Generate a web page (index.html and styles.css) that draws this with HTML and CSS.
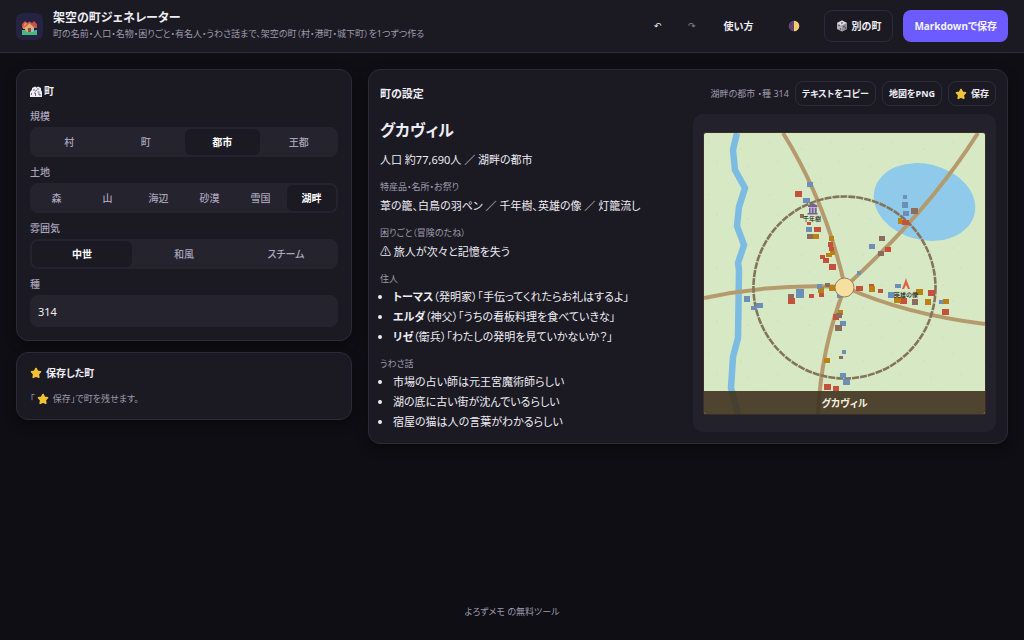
FILE: index.html
```html
<!DOCTYPE html>
<html lang="ja">
<head>
<meta charset="utf-8">
<meta name="viewport" content="width=device-width, initial-scale=1">
<title>架空の町ジェネレーター</title>
<link rel="stylesheet" href="styles.css">
</head>
<body>
<svg class="defs" aria-hidden="true">
  <symbol id="star" viewBox="0 0 12 12"><path d="M6 1.500 7.500 4.300l3 .5-2.200 2.300.5 3.200L6 9l-2.800 1.300.5-3.200-2.200-2.300 3-.5z" fill="#f2c335" stroke="#f2c335" stroke-width="1.600" stroke-linejoin="round"/></symbol>
</svg>
<header class="topbar">
  <div class="brand">
    <svg class="logo" viewBox="0 0 27 27" aria-hidden="true">
      <rect width="27" height="27" rx="7" fill="#252342"/>
      <path d="M6 15V11l3-3 2 2 2.500-1.500L16 10l2-2 3 3v4z" fill="#c9503f"/>
      <path d="M8 11l2-2 1.500 3-2 4H7z" fill="#ef8a62"/>
      <path d="M9 14l4.500-4 4.500 4v5H9z" fill="#e5a878"/>
      <path d="M8.500 14 13.500 9.500l5 4.500" fill="none" stroke="#d65c42" stroke-width="1.300"/>
      <path d="M12 15h3v4h-3z" fill="#805247"/><path d="M15.500 15H18v3h-2.500z" fill="#8cc8d7"/>
      <path d="M6 17h3l2 2h6l2-2h2v5H6z" fill="#45b980"/>
    </svg>
    <div class="brand-text">
      <h1>架空の町ジェネレーター</h1>
      <p>町の名前・人口・名物・困りごと・有名人・うわさ話まで、架空の町（村・港町・城下町）を1つずつ作る</p>
    </div>
  </div>
  <nav class="tools" aria-label="操作">
    <button class="ghost" aria-label="元に戻す">↶</button>
    <button class="ghost" aria-label="やり直す" disabled>↷</button>
    <button class="ghost help">使い方</button>
    <button class="ghost theme" aria-label="テーマ">
      <svg class="moon" viewBox="0 0 12 12"><circle cx="6" cy="6" r="5.300" fill="#654673"/><path d="M6 .7a5.300 5.300 0 0 1 0 10.600z" fill="#f6cc72"/><path d="M3 3h1v2H3zM3.500 8h1v1h-1z" fill="#4b355d"/></svg>
    </button>
    <button class="outline">
      <svg class="icon" viewBox="0 0 12 12" aria-hidden="true"><path d="M6 .5 11 3v6L6 11.500 1 9V3z" fill="#b5b0bc"/><path d="M6 .5 11 3 6 5.500 1 3z" fill="#dcd7e1"/><path d="M6 5.500 11 3v6l-5 2.500z" fill="#918b9b"/><g fill="#3e3946"><circle cx="6" cy="3" r=".8"/><circle cx="3" cy="5.500" r=".7"/><circle cx="4.500" cy="9" r=".7"/><circle cx="8" cy="6.500" r=".7"/><circle cx="9.500" cy="8" r=".7"/></g></svg>
      別の町
    </button>
    <button class="primary">Markdownで保存</button>
  </nav>
</header>

<main class="layout">
  <aside class="side">
    <section class="card form">
      <h2><svg class="houses" viewBox="0 0 12 11" aria-hidden="true"><path d="M0 6 2 3.500V2l3-1.500 1.500 1L8 .5 11 2v2l1 2v5H0z" fill="#eeecf4"/><path d="M3 4h2M7 3h2M1.500 7v2M4 7h1.500v3M7.500 6h2M8 8h2v2M5 5.500 7 4" fill="none" stroke="#1b1a23" stroke-width=".6"/></svg>町</h2>
      <div class="field"><span class="label" id="l-size">規模</span>
        <div class="segments" role="group" aria-labelledby="l-size"><button>村</button><button>町</button><button class="on" aria-pressed="true">都市</button><button>王都</button></div></div>
      <div class="field"><span class="label" id="l-land">土地</span>
        <div class="segments" role="group" aria-labelledby="l-land"><button>森</button><button>山</button><button>海辺</button><button>砂漠</button><button>雪国</button><button class="on" aria-pressed="true">湖畔</button></div></div>
      <div class="field"><span class="label" id="l-mood">雰囲気</span>
        <div class="segments" role="group" aria-labelledby="l-mood"><button class="on" aria-pressed="true">中世</button><button>和風</button><button>スチーム</button></div></div>
      <div class="field"><label class="label" for="seed">種</label><input id="seed" type="text" value="314"></div>
    </section>
    <section class="card saved">
      <h2><svg class="icon" aria-hidden="true"><use href="#star"/></svg>保存した町</h2>
      <p>「<svg class="icon" aria-hidden="true"><use href="#star"/></svg> 保存」で町を残せます。</p>
    </section>
  </aside>

  <section class="card result">
    <div class="result-head">
      <h2>町の設定</h2>
      <span class="meta">湖畔の都市 ・種 314</span>
      <button class="outline small">テキストをコピー</button>
      <button class="outline small">地図をPNG</button>
      <button class="outline small"><svg class="icon" aria-hidden="true"><use href="#star"/></svg>保存</button>
    </div>
    <div class="result-body">
      <article class="town">
        <h3>グカヴィル</h3>
        <p>人口 約77,690人 ／ 湖畔の都市</p>
        <h4>特産品・名所・お祭り</h4>
        <p>葦の籠、白鳥の羽ペン ／ 千年樹、英雄の像 ／ 灯籠流し</p>
        <h4>困りごと（冒険のたね）</h4>
        <p>⚠ 旅人が次々と記憶を失う</p>
        <h4>住人</h4>
        <ul>
          <li><b>トーマス</b>（発明家）「手伝ってくれたらお礼はするよ」</li>
          <li><b>エルダ</b>（神父）「うちの看板料理を食べていきな」</li>
          <li><b>リゼ</b>（衛兵）「わたしの発明を見ていかないか？」</li>
        </ul>
        <h4>うわさ話</h4>
        <ul>
          <li>市場の占い師は元王宮魔術師らしい</li>
          <li>湖の底に古い街が沈んでいるらしい</li>
          <li>宿屋の猫は人の言葉がわかるらしい</li>
        </ul>
      </article>
      <div class="map-frame">
        <svg class="map" viewBox="0 0 281 281" role="img" aria-label="グカヴィルの地図">
          <defs>
            <pattern id="grain" width="61" height="53" patternUnits="userSpaceOnUse"><g fill="#c8dab2"><circle cx="5" cy="9" r=".7"/><circle cx="22" cy="4" r=".6"/><circle cx="37" cy="16" r=".7"/><circle cx="52" cy="8" r=".6"/><circle cx="13" cy="29" r=".7"/><circle cx="44" cy="33" r=".7"/><circle cx="28" cy="42" r=".6"/><circle cx="56" cy="46" r=".7"/></g></pattern>
          </defs>
          <rect width="281" height="281" fill="#d7e9c4"/>
          <rect width="281" height="281" fill="url(#grain)"/>
          <path d="M33 0 29 17 31 37 41 55 35 74 33 93 40 112 34 130 35 137 34 205 29 224 27 255 34 281" fill="none" stroke="#7dbce2" stroke-width="6.500"/>
          <ellipse cx="220.500" cy="69" rx="51.500" ry="38" transform="rotate(14 220.500 69)" fill="#8fcaea"/>
          <g fill="none" stroke="#b59a6e" stroke-width="4">
            <path d="M79 0Q122 69 141 154"/><path d="M274 0Q224 79 141 154"/><path d="M0 165Q70 150 141 154"/><path d="M281 191Q200 181 141 154"/><path d="M114 281Q117 215 141 154"/>
          </g>
          <circle cx="140.500" cy="154.500" r="91" fill="none" stroke="#84745a" stroke-width="2.600" stroke-dasharray="7 1"/>
          <g fill="#c4513b">
            <path d="M91 58h7v6h-7zM103 89h4v3h-4zM110 94h7v5h-7zM124 109h5v5h-5zM125 114h5v4h-5zM116 122h5v4h-5zM119 125h6v5h-6zM125 131h7v6h-7z"/>
            <path d="M198 87h7v5h-7zM181 114h6v5h-6z"/>
            <path d="M84 165h7v6h-7zM105 161h5v4h-5zM115 159h5v5h-5zM129 181h6v6h-6zM120 251h7v6h-7zM129 253h6v5h-6z"/>
            <path d="M152 153h7v5h-7zM165 151h5v4h-5zM174 156h5v4h-5zM196 165h7v6h-7zM224 157h7v6h-7zM238 176h7v6h-7z"/>
          </g>
          <g fill="#b98212">
            <path d="M109 101h6v5h-6zM125 103h5v5h-5zM126 118h5v4h-5zM122 120h6v4h-6zM194 85h4v6h-4z"/>
            <path d="M114 154h6v6h-6zM125 152h6v6h-6zM134 177h5v5h-5zM120 225h6v5h-6z"/>
            <path d="M165 153h6v6h-6zM190 164h7v6h-7zM212 156h7v6h-7zM221 166h6v6h-6zM239 166h6v5h-6z"/>
          </g>
          <g fill="#6b8fb8">
            <path d="M103 49h6v5h-6zM99 65h7v5h-7zM102 94h6v5h-6zM199 62h4v4h-4zM198 69h6v6h-6zM199 78h6v5h-6zM165 111h6v5h-6z"/>
            <path d="M40 163h6v6h-6zM52 170h7v5h-7zM47 173h6v4h-6zM92 156h8v9h-8zM113 151h5v5h-5zM136 188h6v5h-6zM138 217h4v4h-4zM136 240h6v5h-6zM139 246h7v6h-7zM133 161h5v4h-5z"/>
            <path d="M153 138h4v4h-4zM191 151h6v4h-6zM184 159h7v6h-7zM235 167h4v4h-4z"/>
          </g>
          <g fill="#8b6c5e">
            <path d="M96 81h4v4h-4zM103 101h6v5h-6zM207 75h7v6h-7zM175 103h6v5h-6zM174 118h6v5h-6z"/>
            <path d="M84 161h6v4h-6zM121 150h5v4h-5zM132 180h6v5h-6zM131 192h7v6h-7zM135 223h4v3h-4zM208 166h6v6h-6z"/>
          </g>
          <circle cx="140.500" cy="154.500" r="9.500" fill="#f6df9f" stroke="#9a7f55" stroke-width="1"/>
          <path d="M105 73h8v8h-8z" fill="#b9aed0"/>
          <path d="M104 74v-1.500L108.500 70l5 2.500V74zM105 75h1.500v5H105zM108 75h1.500v5H108zM111 75h1.500v5H111zM103.500 80h10v1.500h-10z" fill="#75628f"/>
          <path d="M202 145l1 3 3 8h-2l-2-4-2 4h-2l3-8z" fill="#e45f45"/>
          <text class="place" x="108" y="88">千年樹</text>
          <text class="place" x="202" y="164">英雄の像</text>
          <rect y="258" width="281" height="23" fill="#3f321f" opacity=".9"/>
          <text class="map-title" x="140.500" y="274">グカヴィル</text>
        </svg>
      </div>
    </div>
  </section>
</main>
<footer>よろずメモ の無料ツール</footer>
</body>
</html>
```
FILE: styles.css
```css
* { box-sizing: border-box; }
.defs { display: none; }
body {
  margin: 0;
  min-height: 100vh;
  display: flex;
  flex-direction: column;
  background: #0f0e14;
  color: #eeecf4;
  font: 11px/20px "Noto Sans", "Noto Sans CJK JP", sans-serif;
  font-feature-settings: "palt";
}
h1, h2, h3, h4, p, ul { margin: 0; padding: 0; }
button, input { font: inherit; font-feature-settings: inherit; color: inherit; }
button { border: 0; background: none; padding: 0; cursor: pointer; white-space: nowrap; }
.icon { width: 12px; height: 12px; flex: none; }

.topbar {
  display: flex;
  align-items: center;
  justify-content: space-between;
  gap: 16px;
  padding: 10px 16px;
  background: #1b1a23;
  border-bottom: 1px solid #2d2b38;
}
.brand { display: flex; align-items: center; gap: 10px; }
.logo { width: 27px; height: 27px; flex: none; }
.brand h1 { font-size: 12px; line-height: 16px; }
.brand p { font-size: 9px; line-height: 16px; color: #9e99ad; white-space: nowrap; }
.tools { display: flex; align-items: center; gap: 10px; font-weight: 600; }
.ghost { width: 24px; height: 30px; font-size: 9px; font-weight: 400; }
.ghost:disabled { opacity: .5; }
.ghost.help { width: 50px; font-size: 10px; font-weight: 700; }
.ghost.theme { width: 40px; display: grid; place-items: center; }
.moon { width: 12px; height: 12px; }
.outline, .primary {
  display: flex;
  align-items: center;
  justify-content: center;
  gap: 4px;
  height: 32px;
  padding: 0 11px;
  border-radius: 8px;
  font-size: 10px;
  font-weight: 700;
}
.outline { border: 1px solid #2d2b38; }
.primary { background: #6c5cff; color: #f3f1ff; }

.layout {
  display: grid;
  grid-template-columns: minmax(0, 336fr) minmax(0, 640fr);
  align-items: start;
  gap: 16px;
  padding: 16px;
}
.side { display: grid; gap: 11px; }
.card {
  background: #1b1a23;
  border: 1px solid #2d2b38;
  border-radius: 12px;
  box-shadow: 0 4px 12px #0006;
}
h2 { font-size: 11px; line-height: 20px; display: flex; align-items: center; gap: 4px; }
.form { padding: 11px 13px 13px; display: grid; gap: 7px; }
.form h2 { gap: 2px; font-size: 10px; }
.houses { width: 12px; height: 11px; }
.field { display: grid; gap: 3px; }
.label { font-size: 10px; line-height: 16px; color: #aaa4bb; font-weight: 500; }
.segments { display: flex; gap: 2px; padding: 2px; border-radius: 8px; background: #24232e; }
.segments button { flex: 1; height: 26px; border-radius: 6px; font-size: 10px; color: #aaa4bb; font-weight: 500; }
.segments .on { background: #1b1a23; color: #fff; font-weight: 700; }
.field input { width: 100%; height: 32px; padding: 0 8px; border: 0; border-radius: 8px; background: #24232e; }
.saved { padding: 10px 13px; }
.saved h2 { font-size: 10px; }
.saved p { display: flex; align-items: center; margin-top: 6px; font-size: 9px; color: #9e99ad; white-space: pre; }
.saved p .icon { margin: 0 2px; }

.result { padding: 11px; }
.result-head { display: flex; align-items: center; gap: 6px; }
.result-head h2 { margin-right: auto; }
.meta { font-size: 9px; color: #9e99ad; }
.small { height: 25px; padding: 0 6px; font-size: 9px; }
.result-body {
  display: grid;
  grid-template-columns: minmax(0, 1fr) minmax(0, 1fr);
  gap: 10px;
  margin-top: 8px;
}
.town { white-space: nowrap; }
.town h3 { font-size: 16px; line-height: 32px; }
.town p { margin-top: 4px; }
.town h4 { margin-top: 9px; font-size: 9px; line-height: 16px; color: #9e99ad; font-weight: 400; }
.town h4 + p { margin-top: 1px; }
.town ul { padding-left: 13px; }
.map-frame {
  display: grid;
  place-items: center;
  padding: 11px;
  border-radius: 10px;
  background: #22212c;
}
.map { display: block; width: 100%; border-radius: 2px; box-shadow: 0 0 0 1px #3c2f22; }
.place { font-size: 6px; font-weight: 500; fill: #222; text-anchor: middle; }
.map-title { font-size: 10px; font-weight: 700; fill: #f6efda; text-anchor: middle; }
footer { margin-top: auto; padding: 18px; text-align: center; font-size: 9px; color: #9e99ad; }
```
